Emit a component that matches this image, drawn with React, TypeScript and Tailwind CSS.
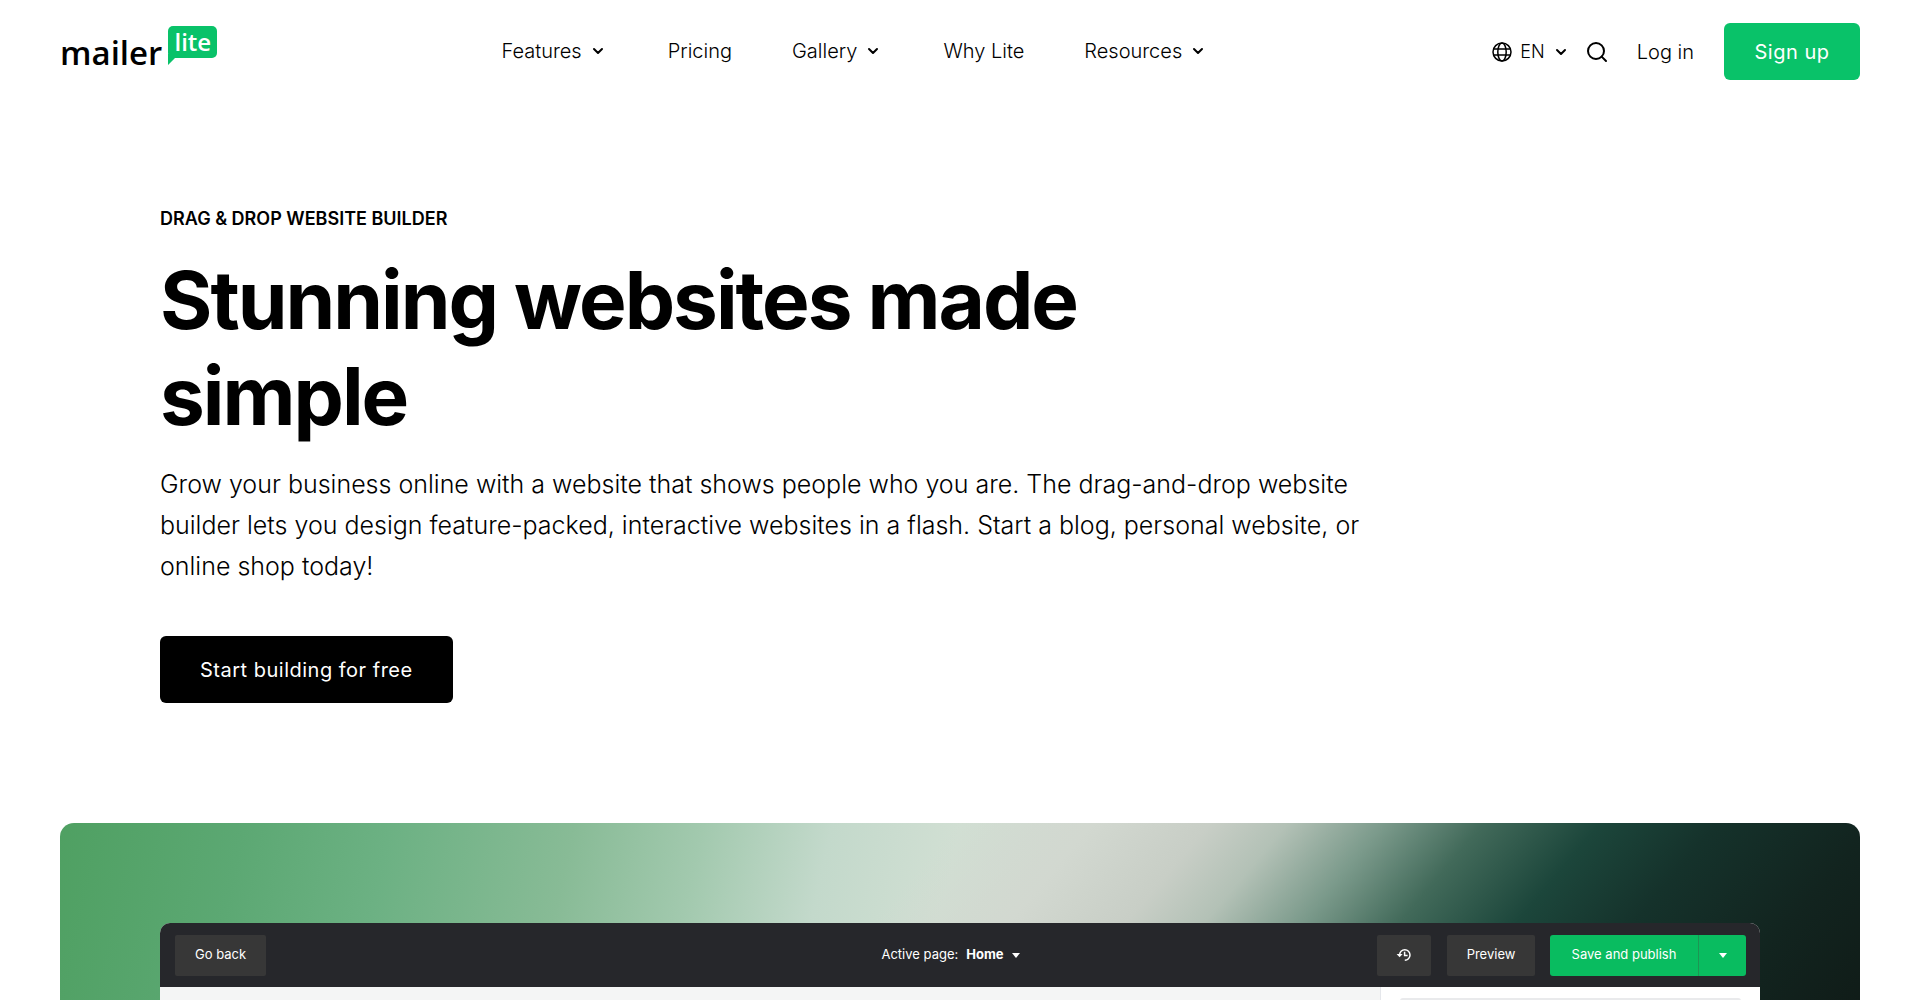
import { ChevronDown, Search } from "lucide-react";

const navItems = [
  { label: "Features", menu: true },
  { label: "Pricing", menu: false },
  { label: "Gallery", menu: true },
  { label: "Why Lite", menu: false },
  { label: "Resources", menu: true },
];

function Logo() {
  return (
    <a href="#" aria-label="mailerlite" className="flex items-start">
      <span className="mt-[9px] font-['Open_Sans',sans-serif] text-[33px] leading-9 font-semibold">
        mailer
      </span>
      <span className="relative ml-1.5 flex h-8 w-[49px] items-center justify-center rounded-[5px] bg-[#09c269] font-['Open_Sans',sans-serif] text-2xl font-semibold text-white">
        <svg
          viewBox="0 0 12 12"
          className="absolute top-7 left-0 size-3 text-[#09c269]"
          fill="currentColor"
          aria-hidden="true"
        >
          <path d="M0 0h12L7 4 0 11z" />
        </svg>
        <span className="relative leading-8">lite</span>
      </span>
    </a>
  );
}

function GlobeIcon() {
  return (
    <svg
      viewBox="0 0 20 20"
      className="size-5"
      fill="none"
      stroke="currentColor"
      strokeWidth="1.5"
      aria-hidden="true"
    >
      <circle cx="10" cy="10" r="9" />
      <ellipse cx="10" cy="10" rx="4.2" ry="9" />
      <path d="M1.6 7h16.8M1.6 13h16.8" />
    </svg>
  );
}

function Header() {
  return (
    <header className="flex items-start justify-between px-[60px] pt-[23px]">
      <div className="pt-[3px]">
        <Logo />
      </div>

      <nav className="flex h-[55px] items-center gap-[60px] text-xl font-light">
        {navItems.map((item) =>
          item.menu ? (
            <button key={item.label} type="button" className="flex items-center gap-2 pr-0.5">
              {item.label}
              <ChevronDown className="size-4" strokeWidth={3} />
            </button>
          ) : (
            <a key={item.label} href="#">
              {item.label}
            </a>
          ),
        )}
      </nav>

      <div className="flex h-[57px] items-center text-xl font-light">
        <button type="button" className="flex items-center gap-2 text-lg">
          <GlobeIcon />
          EN
          <ChevronDown className="size-4" strokeWidth={3} />
        </button>
        <button type="button" aria-label="Search" className="ml-4">
          <Search className="size-6" strokeWidth={2} />
        </button>
        <a href="#" className="ml-7">
          Log in
        </a>
        <a
          href="#"
          className="ml-[30px] flex h-[57px] w-[136px] items-center justify-center rounded-md bg-[#09c269] font-normal tracking-wide text-white"
        >
          Sign up
        </a>
      </div>
    </header>
  );
}

function Intro() {
  return (
    <section className="px-40 pt-[125px] pb-[120px]">
      <p className="text-lg leading-7 font-semibold uppercase">
        Drag &amp; drop website builder
      </p>
      <h1 className="mt-[19px] max-w-[1000px] text-[80px] leading-24 font-bold tracking-tight">
        Stunning websites made simple
      </h1>
      <p className="mt-5 max-w-[1260px] text-[25px] leading-[41px] font-light">
        Grow your business online with a website that shows people who you are. The
        drag-and-drop website builder lets you design feature-packed, interactive
        websites in a flash. Start a blog, personal website, or online shop today!
      </p>
      <a
        href="#"
        className="mt-[49px] inline-flex h-[67px] items-center rounded-md bg-black px-10 text-xl tracking-wide text-white"
      >
        Start building for free
      </a>
    </section>
  );
}

function Caret() {
  return (
    <svg viewBox="0 0 8 5" className="h-[5px] w-2" fill="currentColor" aria-hidden="true">
      <path d="M0 0h8L4 5z" />
    </svg>
  );
}

function HistoryIcon() {
  return (
    <svg
      viewBox="0 0 16 16"
      className="size-4"
      fill="none"
      stroke="currentColor"
      strokeWidth="1.5"
      aria-hidden="true"
    >
      <path d="M3.6 8a5.2 5.2 0 1 1 5.2 5.2" />
      <path d="M.6 7h6L3.6 10.2z" fill="currentColor" stroke="none" />
      <path d="M8.6 4.8v3.6h3" />
    </svg>
  );
}

function Editor() {
  return (
    <section className="mx-[60px] flex flex-1 flex-col rounded-t-[14px] bg-[linear-gradient(130deg,transparent_46%,#d2d8d0_53%,#c8cec6_59%,#b3c1b6_63%,#7b9a8b_68%,#426a5a_73%,#1c463b_79%,#15322b_85%,#12241f_93%,#101c18_100%),linear-gradient(102deg,#4fa062_0%,#5ca873_10%,#6cb183_18%,#88bb96_28%,#a2c9ae_35%,#c3d9cb_42%,#d1dfd3_49%,#d2d8d0_60%)] px-[100px] pt-[100px]">
      <div className="flex flex-1 flex-col overflow-hidden rounded-t-[10px] bg-[#f4f5f5]">
        <div className="flex h-16 items-center justify-between bg-[#26272b] pr-3.5 pl-[15px] text-[13px] text-white">
          <div className="flex flex-1">
            <button type="button" className="h-[41px] rounded-xs bg-[#373737] px-5">
              Go back
            </button>
          </div>
          <button type="button" className="mr-5 flex items-center gap-2">
            <span>Active page:</span>
            <strong className="font-bold">Home</strong>
            <Caret />
          </button>
          <div className="flex flex-1 justify-end">
            <button
              type="button"
              aria-label="History"
              className="flex h-[41px] w-[54px] items-center justify-center rounded-xs bg-[#373737]"
            >
              <HistoryIcon />
            </button>
            <button type="button" className="ml-4 h-[41px] w-[88px] rounded-xs bg-[#373737]">
              Preview
            </button>
            <button
              type="button"
              className="ml-[15px] h-[41px] w-[148px] rounded-l-[3px] bg-[#09bc60]"
            >
              Save and publish
            </button>
            <button
              type="button"
              aria-label="More publish options"
              className="flex h-[41px] w-12 items-center justify-center rounded-r-[3px] border-l border-[#1d9553] bg-[#09bc60]"
            >
              <Caret />
            </button>
          </div>
        </div>

        <div className="flex flex-1 justify-end">
          <aside className="w-[380px] border-l border-gray-200 bg-white px-[19px] pt-[11px]">
            <div className="h-[3px] rounded-t-sm bg-[#e9eaec]" />
          </aside>
        </div>
      </div>
    </section>
  );
}

export default function App() {
  return (
    <div className="flex min-h-screen flex-col bg-white font-[Inter,sans-serif] text-black">
      <Header />
      <main className="flex flex-1 flex-col">
        <Intro />
        <Editor />
      </main>
    </div>
  );
}
